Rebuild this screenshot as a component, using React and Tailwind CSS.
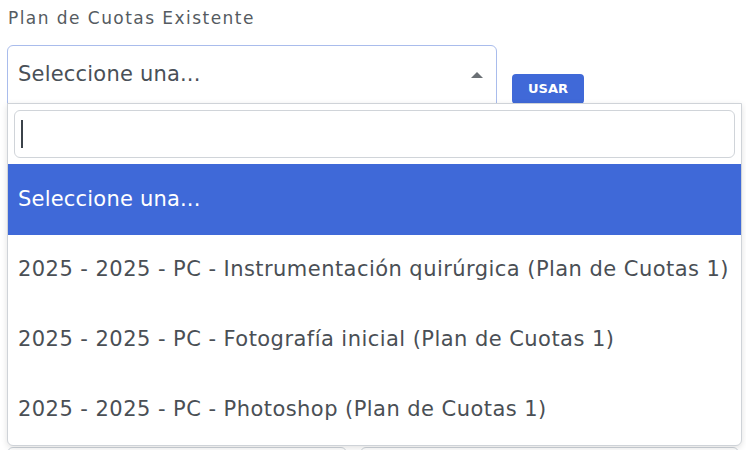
import React from 'react';

const opciones = [
  '2025 - 2025 - PC - Instrumentación quirúrgica (Plan de Cuotas 1)',
  '2025 - 2025 - PC - Fotografía inicial (Plan de Cuotas 1)',
  '2025 - 2025 - PC - Photoshop (Plan de Cuotas 1)',
];

const App = () => {
  return (
    <div className="relative w-[746px] h-[450px] overflow-hidden bg-white font-['DejaVu_Sans',sans-serif] text-[#495057]">
      <div className="px-[7px] pt-[6px]">
        <label className="block pl-[1px] text-[17px] tracking-[1.45px] text-[#555b61]">Plan de Cuotas Existente</label>

        <div className="mt-[13px] flex items-start gap-[15px]">
          <div className="flex h-[60px] w-[490px] items-center justify-between rounded-t-[6px] border border-[#a9bcec] pl-[10px] pr-[10px]">
            <span className="text-[21px] tracking-[0.2px] text-[#495057]">Seleccione una...</span>
            <span className="mr-[3px] h-0 w-0 border-x-[6px] border-b-[6px] border-x-transparent border-b-[#6b7075]" />
          </div>
          <button className="mt-[29px] h-[30px] w-[72px] rounded-[4px] bg-[#4069d8] text-[13px] font-bold text-white">
            USAR
          </button>
        </div>

        <div className="mt-[131px] flex flex-col gap-[28px]">
          <div className="h-[30px] border-b border-[#dee2e6]" />
          <div className="h-[30px] border-b border-[#dee2e6]" />
        </div>

        <div className="mt-[123px] flex gap-[13px]">
          <div className="h-[40px] w-[340px] rounded-[6px] border border-[#ced4da]" />
          <div className="h-[40px] flex-1 rounded-[6px] border border-[#ced4da]" />
        </div>
      </div>

      <div className="absolute left-[7px] top-[103px] w-[735px] rounded-b-[6px] border border-[#cfd3d8] bg-white shadow-[0_2px_6px_rgba(0,0,0,0.12)]">
        <div className="p-[6px]">
          <div className="flex h-[48px] items-center rounded-[6px] border border-[#d0d4d9] px-[6px]">
            <span className="h-[28px] w-[2px] bg-[#3b424a]" />
          </div>
        </div>
        <div className="flex h-[71px] items-center bg-[#3f69d8] px-[10px] text-[21px] tracking-[0.2px] text-white">
          Seleccione una...
        </div>
        {opciones.map((op) => (
          <div key={op} className="flex h-[70px] items-center px-[10px] text-[21px] tracking-[0.45px] text-[#4a4f55]">
            {op}
          </div>
        ))}
      </div>
    </div>
  );
};

export default App;
